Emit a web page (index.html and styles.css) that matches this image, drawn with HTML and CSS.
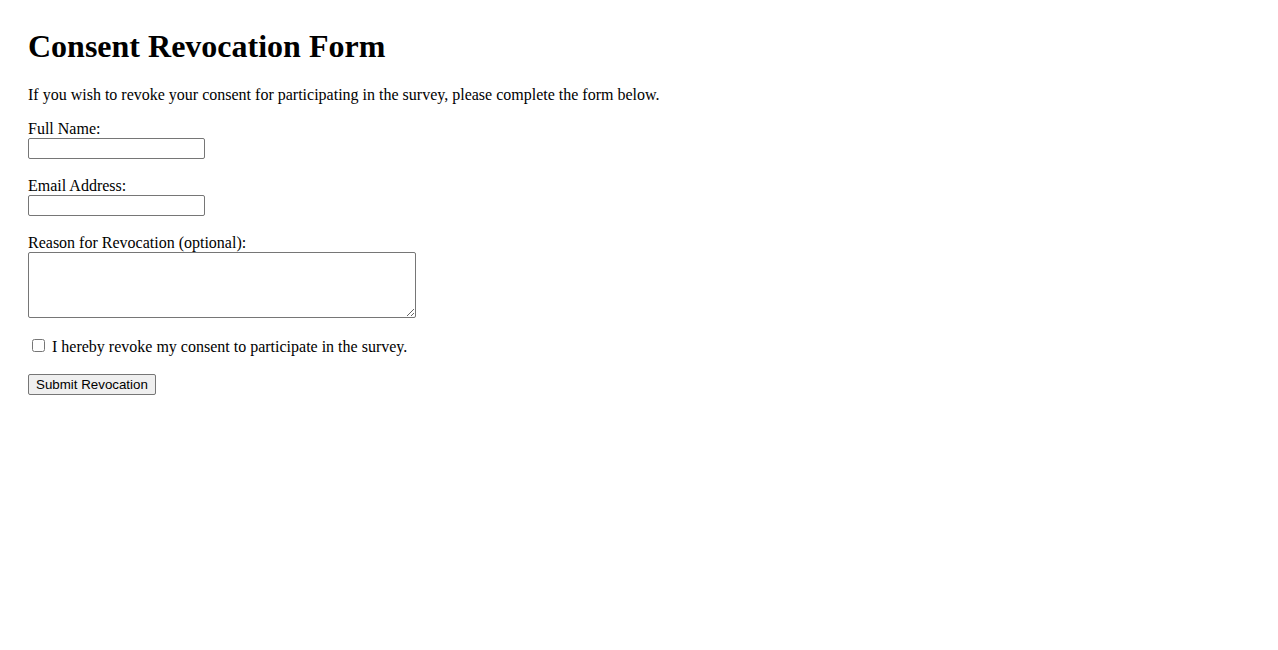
FILE: index.html
```html
<!DOCTYPE html>
<html lang="en">
<head>
  <meta charset="UTF-8" />
  <title>Consent Revocation Form</title>
  <link rel="stylesheet" href="styles.css">
</head>
<body>
  <h1>Consent Revocation Form</h1>
  <p>If you wish to revoke your consent for participating in the survey, please complete the form below.</p>
  <form>
    <label for="name">Full Name:</label><br>
    <input type="text" id="name" name="name" class="field"><br><br>

    <label for="email">Email Address:</label><br>
    <input type="email" id="email" name="email" class="field"><br><br>

    <label for="reason">Reason for Revocation (optional):</label><br>
    <textarea id="reason" name="reason" rows="4" cols="50" class="reason"></textarea><br><br>

    <input type="checkbox" id="confirm" name="confirm" class="check">
    <label for="confirm">I hereby revoke my consent to participate in the survey.</label><br><br>

    <input type="submit" value="Submit Revocation" class="submit">
  </form>
</body>
</html>
```

FILE: styles.css
```css
body {
  margin: 28px;
  font-family: "Liberation Serif", "Times New Roman", serif;
  font-size: 16px;
  color: #000;
  background: #fff;
}

h1 {
  font-size: 32px;
  margin: 0 0 21px;
}

form {
  margin: 0;
}

.field {
  width: 177px;
  height: 21px;
  box-sizing: border-box;
  border: 1px solid #767676;
  border-radius: 2px;
  padding: 1px 2px;
  margin: 0;
  font-family: "Liberation Sans", Arial, sans-serif;
  font-size: 13px;
}

.reason {
  width: 388px;
  height: 66px;
  box-sizing: border-box;
  border: 1px solid #767676;
  border-radius: 2px;
  margin: 0;
  vertical-align: bottom;
  font-family: "Liberation Mono", monospace;
  font-size: 13px;
}

.check {
  width: 13px;
  height: 13px;
  margin: 3px 3px 3px 4px;
}

.submit {
  height: 21px;
  padding: 1px 7px;
  border: 1px solid #767676;
  border-radius: 2px;
  background: #efefef;
  font-family: "Liberation Sans", Arial, sans-serif;
  font-size: 13.33px;
  color: #000;
  margin: 0;
}
```
